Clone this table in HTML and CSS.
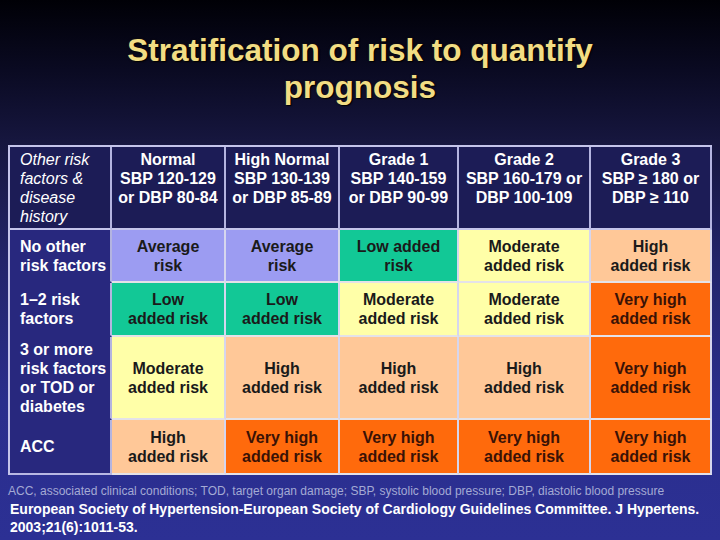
FILE: index.html
```html
<!DOCTYPE html>
<html>
<head>
<meta charset="utf-8">
<link rel="stylesheet" href="styles.css">
</head>
<body>
<div class="slide">
  <h1 class="title">Stratification of risk to quantify<br>prognosis</h1>
  <div class="grid">
    <div class="cell hd left italic">Other risk factors &amp; disease history</div>
    <div class="cell hd">Normal<br>SBP 120-129<br>or DBP 80-84</div>
    <div class="cell hd">High Normal<br>SBP 130-139<br>or DBP 85-89</div>
    <div class="cell hd">Grade 1<br>SBP 140-159<br>or DBP 90-99</div>
    <div class="cell hd">Grade 2<br>SBP 160-179 or<br>DBP 100-109</div>
    <div class="cell hd">Grade 3<br>SBP ≥ 180 or<br>DBP ≥ 110</div>

    <div class="cell side mid">No other<br>risk factors</div>
    <div class="cell purple">Average<br>risk</div>
    <div class="cell purple">Average<br>risk</div>
    <div class="cell green">Low added<br>risk</div>
    <div class="cell yellow">Moderate<br>added risk</div>
    <div class="cell peach">High<br>added risk</div>

    <div class="cell side mid">1–2 risk<br>factors</div>
    <div class="cell green">Low<br>added risk</div>
    <div class="cell green">Low<br>added risk</div>
    <div class="cell yellow">Moderate<br>added risk</div>
    <div class="cell yellow">Moderate<br>added risk</div>
    <div class="cell orange">Very high<br>added risk</div>

    <div class="cell side">3 or more<br>risk factors<br>or TOD or<br>diabetes</div>
    <div class="cell yellow">Moderate<br>added risk</div>
    <div class="cell peach">High<br>added risk</div>
    <div class="cell peach">High<br>added risk</div>
    <div class="cell peach">High<br>added risk</div>
    <div class="cell orange">Very high<br>added risk</div>

    <div class="cell side mid last">ACC</div>
    <div class="cell peach">High<br>added risk</div>
    <div class="cell orange">Very high<br>added risk</div>
    <div class="cell orange">Very high<br>added risk</div>
    <div class="cell orange">Very high<br>added risk</div>
    <div class="cell orange">Very high<br>added risk</div>
  </div>
  <p class="note">ACC, associated clinical conditions; TOD, target organ damage; SBP, systolic blood pressure; DBP, diastolic blood pressure</p>
  <p class="cite">European Society of Hypertension-European Society of Cardiology Guidelines Committee. J Hypertens.<br>2003;21(6):1011-53.</p>
</div>
</body>
</html>
```

FILE: styles.css
```css
html, body {
  margin: 0;
  padding: 0;
}
body {
  width: 720px;
  height: 540px;
  overflow: hidden;
  font-family: "Liberation Sans", Arial, sans-serif;
  background: linear-gradient(to bottom, #000006 0px, #0a0a22 70px, #16163e 140px, #22246a 260px, #2a2e8c 400px, #2c3094 540px);
}
.slide {
  width: 720px;
  height: 540px;
  padding-top: 32px;
  box-sizing: border-box;
}
.title {
  margin: 0;
  text-align: center;
  font-size: 31.5px;
  line-height: 37px;
  font-weight: bold;
  color: #f2dd84;
  text-shadow: 1px 1px 1px #000000, 0 0 2px #201808;
}
.grid {
  margin: 39px 0 0 8px;
  width: 704px;
  box-sizing: border-box;
  display: grid;
  grid-template-columns: 102px 114px 114px 119px 132px 121px;
  grid-template-rows: 83px 53px 54px 83px 55px;
  border-top: 2px solid #c4c4ea;
  border-left: 2px solid #c4c4ea;
}
.cell {
  box-sizing: border-box;
  border-right: 2px solid #d6d6ee;
  border-bottom: 2px solid #e4e2e8;
  font-size: 16px;
  line-height: 19px;
  font-weight: bold;
  text-align: center;
  display: flex;
  align-items: center;
  justify-content: center;
  color: #1a1a1a;
}
.hd {
  background: #1c1c56;
  color: #ffffff;
  align-items: flex-start;
  padding-top: 3px;
  border-right-color: #b4b4e0;
  border-bottom-color: #c4c4ea;
}
.left {
  justify-content: flex-start;
  text-align: left;
  padding-left: 10px;
  padding-right: 4px;
}
.italic {
  font-style: italic;
  font-weight: normal;
}
.side {
  background: #28287e;
  color: #ffffff;
  justify-content: flex-start;
  text-align: left;
  padding-left: 10px;
  border-bottom-color: #28287e;
  border-right-color: #b4b4e0;
}
.side.last {
  border-bottom-color: #b8b8e4;
}
.purple { background: #9c9cf2; }
.green { background: #12c896; }
.yellow { background: #ffffa8; }
.peach { background: #ffc898; }
.orange { background: #ff6a0c; color: #3a1206; }
.note {
  margin: 9px 0 0 8px;
  font-size: 12px;
  line-height: 14px;
  color: #a4aad4;
  white-space: nowrap;
}
.cite {
  margin: 2px 0 0 10px;
  font-size: 14px;
  line-height: 18px;
  font-weight: bold;
  color: #ffffff;
  white-space: nowrap;
}
```
